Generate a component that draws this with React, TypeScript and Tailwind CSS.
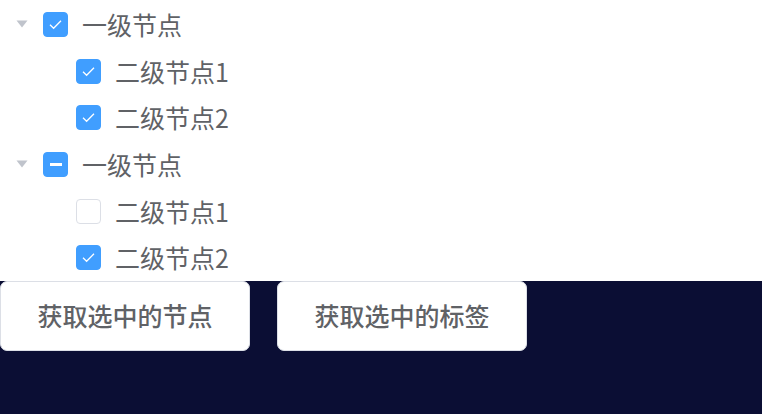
import { useState } from 'react'

type Node = {
  id: number
  label: string
  children?: Node[]
}

const TREE: Node[] = [
  {
    id: 1,
    label: '一级节点',
    children: [
      { id: 11, label: '二级节点1' },
      { id: 12, label: '二级节点2' },
    ],
  },
  {
    id: 2,
    label: '一级节点',
    children: [
      { id: 21, label: '二级节点1' },
      { id: 22, label: '二级节点2' },
    ],
  },
]

type CheckState = 'checked' | 'unchecked' | 'indeterminate'

function Checkbox({ state, onClick }: { state: CheckState; onClick: () => void }) {
  const filled = state !== 'unchecked'
  return (
    <span
      onClick={onClick}
      className={
        filled
          ? 'relative flex h-[25px] w-[25px] shrink-0 cursor-pointer items-center justify-center rounded-[4px] border border-[#409eff] bg-[#409eff]'
          : 'relative flex h-[25px] w-[25px] shrink-0 cursor-pointer items-center justify-center rounded-[4px] border border-[#dcdfe6] bg-white'
      }
    >
      {state === 'checked' && (
        <svg width="25" height="25" viewBox="0 0 25 25" className="absolute -left-px -top-px">
          <path d="M7 12.8 L10.6 16.3 L18 8.8" fill="none" stroke="#fff" strokeWidth="1.3" />
        </svg>
      )}
      {state === 'indeterminate' && <span className="h-[2.5px] w-[12px] bg-white" />}
    </span>
  )
}

export default function App() {
  const [checked, setChecked] = useState<Record<number, boolean>>({
    11: true,
    12: true,
    21: false,
    22: true,
  })

  const parentState = (node: Node): CheckState => {
    const kids = node.children ?? []
    const n = kids.filter((k) => checked[k.id]).length
    if (n === 0) return 'unchecked'
    if (n === kids.length) return 'checked'
    return 'indeterminate'
  }

  const toggleParent = (node: Node) => {
    const next = parentState(node) !== 'checked'
    const copy = { ...checked }
    for (const k of node.children ?? []) copy[k.id] = next
    setChecked(copy)
  }

  const font = { fontFamily: '"Noto Sans CJK SC", "Noto Sans", sans-serif' }

  return (
    <div className="flex h-[414px] w-[762px] flex-col bg-[#0b0e34]" style={font}>
      {/* Tree */}
      <div className="flex flex-col bg-white pt-px">
        {TREE.map((node) => (
          <div key={node.id} className="flex flex-col">
            <div className="flex h-[46.7px] items-center text-[25px] text-[#606266]">
              <span className="flex w-[43px] shrink-0 items-center justify-center">
                <svg width="12" height="8" viewBox="0 0 12 8">
                  <path d="M0.5 0.5 L11.5 0.5 L6 7.5 Z" fill="#c0c4cc" />
                </svg>
              </span>
              <Checkbox state={parentState(node)} onClick={() => toggleParent(node)} />
              <span className="ml-[14px] leading-none">{node.label}</span>
            </div>
            {node.children?.map((child) => (
              <div
                key={child.id}
                className="flex h-[46.7px] items-center pl-[76px] text-[25px] text-[#606266]"
              >
                <Checkbox
                  state={checked[child.id] ? 'checked' : 'unchecked'}
                  onClick={() => setChecked({ ...checked, [child.id]: !checked[child.id] })}
                />
                <span className="ml-[14px] leading-none">{child.label}</span>
              </div>
            ))}
          </div>
        ))}
      </div>

      {/* Buttons */}
      <div className="flex gap-[27px]">
        <button className="flex h-[70px] w-[250px] items-center justify-center rounded-[7px] border border-[#dcdfe6] bg-white text-[25px] font-medium text-[#606266]">
          获取选中的节点
        </button>
        <button className="flex h-[70px] w-[250px] items-center justify-center rounded-[7px] border border-[#dcdfe6] bg-white text-[25px] font-medium text-[#606266]">
          获取选中的标签
        </button>
      </div>
    </div>
  )
}
